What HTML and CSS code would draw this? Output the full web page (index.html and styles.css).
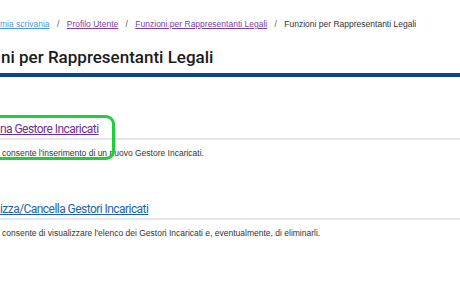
FILE: index.html
```html
<!DOCTYPE html>
<html lang="it">
<head>
  <meta charset="UTF-8">
  <meta name="viewport" content="width=device-width, initial-scale=1">
  <title>Funzioni per Rappresentanti Legali</title>
  <link rel="stylesheet" href="styles.css">
</head>
<body>
  <div class="page">
    <!-- Breadcrumb -->
    <nav class="breadcrumb">
      <a href="#" class="crumb-home">mia scrivania</a>
      <span class="sep">/</span>
      <a href="#" class="crumb-visited">Profilo Utente</a>
      <span class="sep">/</span>
      <a href="#" class="crumb-visited">Funzioni per Rappresentanti Legali</a>
      <span class="sep">/</span>
      <span class="crumb-current">Funzioni per Rappresentanti Legali</span>
    </nav>

    <h1 class="page-title">ni per Rappresentanti Legali</h1>

    <!-- Function list -->
    <div class="functions">
      <div class="function highlighted">
        <h2 class="function-title"><a href="#" class="visited">na Gestore Incaricati</a></h2>
        <p class="function-desc">consente l'inserimento di un nuovo Gestore Incaricati.</p>
      </div>
      <div class="function">
        <h2 class="function-title"><a href="#">izza/Cancella Gestori Incaricati</a></h2>
        <p class="function-desc">consente di visualizzare l'elenco dei Gestori Incaricati e, eventualmente, di eliminarli.</p>
      </div>
    </div>
  </div>
</body>
</html>
```

FILE: styles.css
```css
/* Base */
body {
  margin: 0;
  background: #fff;
  font-family: "Liberation Sans", Arial, sans-serif;
  color: #333;
}
.page {
  overflow: hidden;
}

/* Breadcrumb */
.breadcrumb {
  padding: 18px 0 0 0;
  font-size: 8.5px;
  line-height: 12px;
  color: #333;
  white-space: nowrap;
}
.breadcrumb a {
  text-decoration: underline;
}
.breadcrumb .sep {
  margin: 0 5px;
  color: #555;
}
.crumb-home {
  color: #4f9ad8;
}
.crumb-visited {
  color: #7b3f9e;
}
.crumb-current {
  color: #333;
}

/* Title and blue rule */
.page-title {
  margin: 0;
  padding: 16px 0 5px 1px;
  font-family: Roboto, "Open Sans", sans-serif;
  font-weight: 500;
  font-size: 17px;
  line-height: 22px;
  color: #1b1b1b;
  border-bottom: 4px solid #0c4684;
}

/* Functions */
.functions {
  padding-top: 43px;
}
.function {
  position: relative;
  margin-bottom: 41px;
}
.function-title {
  margin: 0;
  font-family: Roboto, "Open Sans", sans-serif;
  font-weight: 400;
  font-size: 12px;
  letter-spacing: -0.55px;
  line-height: 18px;
  border-bottom: 2px solid #e6e6e6;
}
.function-title a {
  color: #1f63a3;
}
.function-title a.visited {
  color: #6a2f95;
}
.function-desc {
  margin: 0;
  padding: 7px 0 0 2px;
  font-size: 8.5px;
  line-height: 12px;
  color: #333;
}

/* Green annotation frame */
.highlighted::after {
  content: "";
  position: absolute;
  left: -20px;
  top: -5px;
  width: 129px;
  height: 39px;
  border: 3px solid #22cc3f;
  border-radius: 9px;
}
```
